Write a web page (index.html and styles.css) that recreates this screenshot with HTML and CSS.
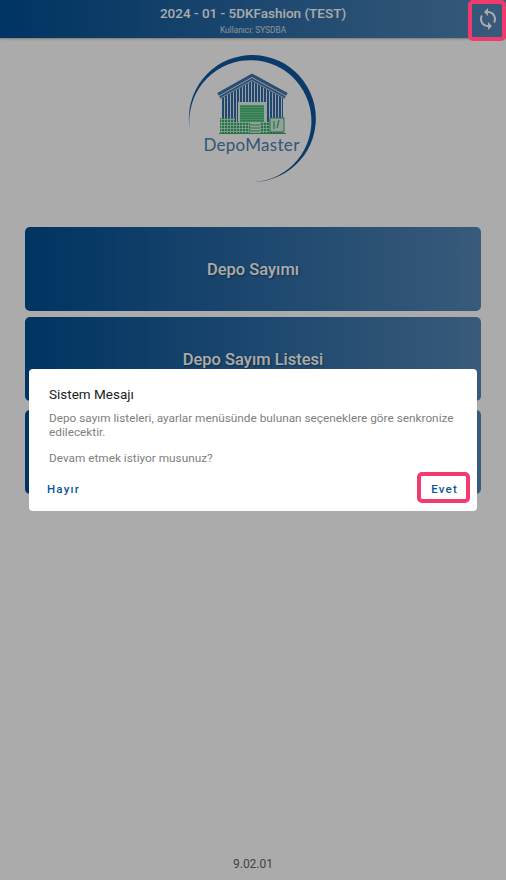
FILE: index.html
```html
<!DOCTYPE html>
<html lang="en">

<head>
    <meta charset="UTF-8">
    <title>DepoMaster</title>
    <link rel="stylesheet" href="styles.css">
</head>

<body>
    <div class="page">
        <header class="topbar">
            <div class="topbar-text">
                <div class="topbar-title">2024 - 01 - 5DKFashion (TEST)</div>
                <div class="topbar-user">Kullanıcı: SYSDBA</div>
            </div>
            <button class="sync-btn">
                <svg width="24" height="24" viewBox="0 0 24 24">
                    <path fill="#fff" d="M12 4V1L8 5l4 4V6c3.31 0 6 2.69 6 6 0 1.01-.25 1.97-.7 2.8l1.46 1.46C19.54 15.03 20 13.57 20 12c0-4.42-3.58-8-8-8zm0 14c-3.31 0-6-2.69-6-6 0-1.01.25-1.97.7-2.8L5.24 7.74C4.46 8.97 4 10.43 4 12c0 4.42 3.58 8 8 8v3l4-4-4-4v3z"/>
                </svg>
            </button>
        </header>

        <div class="logo">
            <svg width="140" height="140" viewBox="183 49 140 140">
                <defs>
                    <linearGradient id="arc-fade" gradientUnits="userSpaceOnUse" x1="191" y1="140" x2="206" y2="128">
                        <stop offset="0" stop-color="#0f579e" stop-opacity="0"/>
                        <stop offset="1" stop-color="#0f579e"/>
                    </linearGradient>
                    <pattern id="wall-lines" width="3" height="4" patternUnits="userSpaceOnUse">
                        <rect width="3" height="4" fill="#e4edf6"/>
                        <rect width="2" height="4" fill="#2f6aa6"/>
                    </pattern>
                    <pattern id="door-lines" width="4" height="2.4" patternUnits="userSpaceOnUse">
                        <rect width="4" height="2.4" fill="#7ad69c"/>
                        <rect width="4" height="1.4" fill="#45b874"/>
                    </pattern>
                    <pattern id="box-lines" width="3" height="3" patternUnits="userSpaceOnUse">
                        <rect width="3" height="3" fill="#cfeedb"/>
                        <rect width="2.2" height="2.2" fill="#38ad68"/>
                    </pattern>
                </defs>
                <path fill="url(#arc-fade)" d="M191 135A63.5 63.5 0 1 1 254.5 182A61 61 0 1 0 191 135Z"/>
                <path fill="url(#wall-lines)" d="M222 97L252 80L283 97V133H222Z"/>
                <path fill="none" stroke="#3f74ab" stroke-width="7" d="M219 96L252 77.5L286 96"/>
                <path fill="none" stroke="#dce8f3" stroke-width="1" d="M219 96L252 77.5L286 96"/>
                <path fill="none" stroke="#dce8f3" stroke-width="0.8" d="M219 99L252 80.5L286 99"/>
                <rect x="238" y="102" width="28" height="31" fill="#e6f5ec"/>
                <rect x="240" y="105" width="24" height="28" fill="url(#door-lines)"/>
                <rect x="220" y="118" width="15" height="15" fill="url(#box-lines)"/>
                <rect x="235" y="122" width="15" height="11" fill="url(#box-lines)"/>
                <rect x="250" y="122" width="10" height="11" fill="#d8f0e1"/>
                <path fill="none" stroke="#38ad68" stroke-width="1" d="M250 125H260M250 128H260M250 131H260"/>
                <rect x="260" y="122" width="10" height="11" fill="url(#box-lines)"/>
                <rect x="270" y="118" width="14" height="14" fill="#d8f0e1" stroke="#38ad68"/>
                <path fill="none" stroke="#38ad68" stroke-width="1.2" d="M274 121V129M279 120L277 128"/>
                <rect x="219" y="133" width="67" height="1" fill="#38ad68"/>
                <text class="logo-text" x="251.5" y="151" text-anchor="middle">DepoMaster</text>
            </svg>
        </div>

        <nav class="menu">
            <button class="menu-btn">Depo Sayımı</button>
            <button class="menu-btn">Depo Sayım Listesi</button>
            <button class="menu-btn menu-btn-last"></button>
        </nav>

        <div class="version">9.02.01</div>
    </div>

    <div class="scrim">
        <div class="dialog">
            <h2 class="dialog-title">Sistem Mesajı</h2>
            <p class="dialog-text">Depo sayım listeleri, ayarlar menüsünde bulunan seçeneklere göre senkronize edilecektir.</p>
            <p class="dialog-text">Devam etmek istiyor musunuz?</p>
            <div class="dialog-actions">
                <button class="dialog-btn">Hayır</button>
                <button class="dialog-btn">Evet</button>
            </div>
        </div>
    </div>

    <!-- red marks from the screenshot, they sit on top of the scrim -->
    <div class="mark mark-sync"></div>
    <div class="mark mark-yes"></div>
</body>

</html>
```

FILE: styles.css
```css
* {
    box-sizing: border-box;
}

html,
body {
    margin: 0;
    height: 880px;
    overflow: hidden;
}

body {
    position: relative;
    background: #fff;
    font-family: Roboto, 'Liberation Sans', sans-serif;
}

button {
    border: none;
    background: none;
    font-family: inherit;
    padding: 0;
}

.page {
    display: flex;
    flex-direction: column;
    height: 880px;
}

.topbar {
    display: flex;
    align-items: center;
    height: 38px;
    flex-shrink: 0;
    background: linear-gradient(90deg, #004e92 0%, #5587b8 100%);
    box-shadow: 0 1px 2px rgba(0, 0, 0, 0.3);
    color: #fff;
}

.topbar-text {
    flex: 1;
    padding: 1px 0 0 38px;
    text-align: center;
}

.topbar-title {
    font-size: 13.5px;
    font-weight: 500;
    line-height: 20px;
}

.topbar-user {
    margin-top: 1px;
    font-size: 8.3px;
    line-height: 12px;
    opacity: 0.75;
}

.sync-btn {
    display: flex;
    width: 38px;
    height: 38px;
    padding-left: 2px;
    align-items: center;
    justify-content: center;
}

.logo {
    display: flex;
    justify-content: center;
    margin-top: 11px;
}

.logo-text {
    font-family: Lato, sans-serif;
    font-size: 17px;
    letter-spacing: 0.3px;
    fill: #4f81b4;
}

.menu {
    display: flex;
    flex-direction: column;
    gap: 6px;
    margin-top: 38px;
    padding: 0 25px;
}

.menu-btn {
    height: 84px;
    border-radius: 5px;
    background: linear-gradient(90deg, #004e92 0%, #5587b8 100%);
    color: #fff;
    font-size: 16.5px;
    font-weight: 500;
    text-shadow: 1px 1px 2px rgba(0, 0, 0, 0.4);
}

.menu-btn-last {
    margin-top: 3px;
}

.version {
    margin-top: auto;
    padding-bottom: 8px;
    font-size: 12px;
    line-height: 16px;
    text-align: center;
    color: #666;
}

.scrim {
    position: absolute;
    top: 0;
    left: 0;
    width: 100%;
    height: 100%;
    display: flex;
    align-items: center;
    justify-content: center;
    background: rgba(0, 0, 0, 0.33);
}

.dialog {
    width: 448px;
    height: 142px;
    padding: 15px 20px 0;
    background: #fff;
    border-radius: 4px;
    display: flex;
    flex-direction: column;
}

.dialog-title {
    margin: 0 0 8px;
    font-size: 13.5px;
    font-weight: 400;
    line-height: 20px;
    color: #222;
}

.dialog-text {
    margin: 0 0 13px;
    font-size: 11.8px;
    line-height: 13.5px;
    color: #808080;
}

.dialog-actions {
    display: flex;
    justify-content: space-between;
    margin: 2px -1px 0 -2px;
}

.dialog-btn {
    font-size: 11.5px;
    font-weight: 500;
    letter-spacing: 1.2px;
    line-height: 16px;
    color: #0a5599;
}

.mark {
    position: absolute;
    border: 4px solid #f23a6e;
    border-radius: 5px;
}

.mark-sync {
    left: 468px;
    top: 0;
    width: 38px;
    height: 41px;
}

.mark-yes {
    left: 417px;
    top: 472px;
    width: 53px;
    height: 31px;
}
```
